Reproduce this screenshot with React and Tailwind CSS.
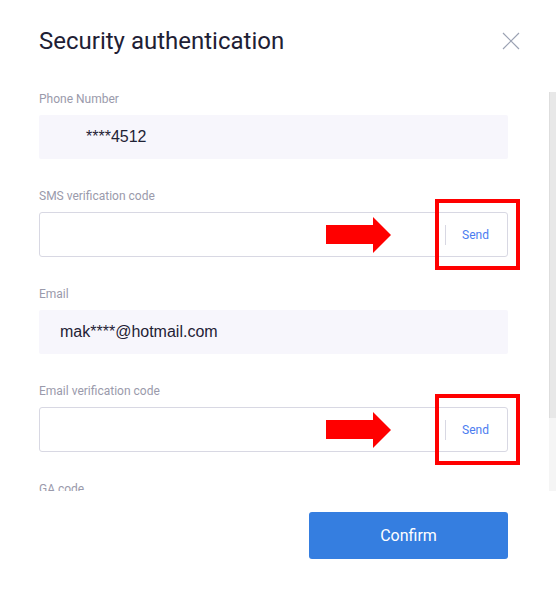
import React from "react";

const Field = ({ label, children }) => (
  <div className="mb-[29px]">
    <div className="text-[12px] leading-4 text-[#9a9aab] mb-2">{label}</div>
    {children}
  </div>
);

const ReadonlyBox = ({ value, indent }) => (
  <div
    className={`h-[44px] bg-[#f7f6fc] rounded-[2px] flex items-center ${indent} text-[16px] text-[#1f2235] font-['Liberation_Sans',Arial,sans-serif]`}
  >
    {value}
  </div>
);

// red arrow + box markup drawn on top of the code input
const Annotation = () => (
  <>
    <svg
      className="absolute left-[286px] top-[4px]"
      width="65"
      height="36"
      viewBox="0 0 65 36"
    >
      <polygon
        points="0,8 47,8 47,0 65,18 47,36 47,27 0,27"
        fill="#ff0000"
      />
    </svg>
    <div className="absolute right-[-13px] top-[-14px] w-[85px] h-[71px] border-4 border-[#ff0000]" />
  </>
);

const CodeInput = () => (
  <div className="relative h-[45px] border border-[#d8d8e3] rounded-[3px] flex items-center">
    <input className="flex-1 h-full bg-transparent outline-none px-4" />
    <div className="w-px h-5 bg-[#d8d8e3]" />
    <button className="pl-4 pr-[18px] text-[12px] text-[#4b7cf0]">Send</button>
    <Annotation />
  </div>
);

export default function App() {
  return (
    <div className="w-[556px] h-[600px] bg-white font-['Roboto',Arial,sans-serif] flex flex-col overflow-hidden">
      <div className="h-[91px] shrink-0 pl-[39px] pr-[36px] pt-[26px] flex justify-between items-start">
        <h1 className="text-[24px] leading-[30px] text-[#1e2034] font-normal">
          Security authentication
        </h1>
        <svg width="18" height="18" viewBox="0 0 18 18" className="mt-[6px]">
          <path d="M1 1 L17 17 M17 1 L1 17" stroke="#9ba2b3" strokeWidth="1.2" />
        </svg>
      </div>

      <div className="h-[400px] shrink-0 flex">
        <div className="flex-1 overflow-hidden pl-[39px] pr-[41px]">
          <Field label="Phone Number">
            <ReadonlyBox value="****4512" indent="pl-[47px]" />
          </Field>
          <Field label="SMS verification code">
            <CodeInput />
          </Field>
          <Field label="Email">
            <ReadonlyBox value="mak****@hotmail.com" indent="pl-[21px]" />
          </Field>
          <Field label="Email verification code">
            <CodeInput />
          </Field>
          <Field label="GA code">
            <div className="h-[45px] border border-[#d8d8e3] rounded-[3px]" />
          </Field>
        </div>
        <div className="w-[7px] mt-[1px] flex flex-col">
          <div className="h-[326px] bg-[#e8e8e8] border-l border-[#dedede]" />
          <div className="flex-1 bg-[#f5f5f5]" />
        </div>
      </div>

      <div className="flex-1 flex justify-end pt-[21px] pr-[48px]">
        <button className="w-[199px] h-[47px] rounded-[3px] bg-[#357ee0] text-white text-[16px]">
          Confirm
        </button>
      </div>
    </div>
  );
}
